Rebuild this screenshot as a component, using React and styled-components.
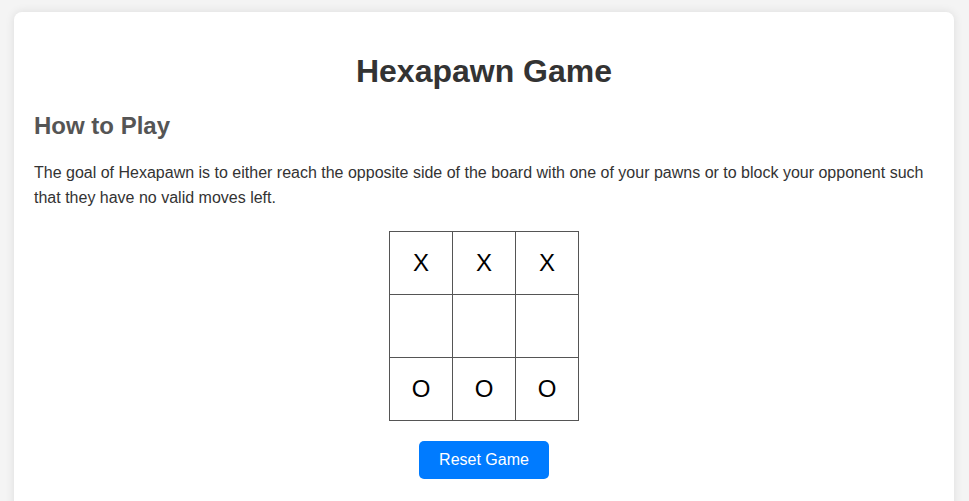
import React, { useState } from "react";
import styled, { createGlobalStyle } from "styled-components";

const Global = createGlobalStyle`
  html, body { margin: 0; padding: 0; background: #f4f4f4; }
  body { font-family: "Liberation Sans", Arial, sans-serif; color: #333; }
`;

const Card = styled.div`
  width: 900px;
  margin: 12px auto 12px 14px;
  padding: 20px;
  background: #fff;
  border-radius: 8px;
  box-shadow: 0 0 10px rgba(0, 0, 0, 0.1);
`;

const Title = styled.h1`
  font-size: 32px;
  margin: 21.44px 0;
  text-align: center;
  color: #333;
`;

const Subtitle = styled.h2`
  font-size: 24px;
  margin: 19.92px 0;
  color: #555;
`;

const Text = styled.p`
  font-size: 16px;
  line-height: 1.6;
  margin: 16px 0;
  color: #333;
`;

const Board = styled.div`
  display: grid;
  grid-template-columns: repeat(3, 62px);
  grid-auto-rows: 62px;
  gap: 1px;
  padding: 1px;
  background: #555;
  width: max-content;
  margin: 20px auto;
`;

const Cell = styled.div`
  background: #fff;
  display: flex;
  align-items: center;
  justify-content: center;
  font-size: 24px;
  color: #000;
  cursor: pointer;
`;

const ButtonRow = styled.div`
  display: flex;
  justify-content: center;
`;

const Button = styled.button`
  font-family: "Liberation Sans", Arial, sans-serif;
  font-size: 16px;
  padding: 10px 20px;
  background: #007bff;
  color: #fff;
  border: none;
  border-radius: 5px;
  cursor: pointer;
  line-height: 18px;
`;

const Status = styled.p`
  font-size: 18px;
  min-height: 26px;
  margin: 20px 0 0;
  text-align: center;
  color: #333;
`;

const initial = ["X", "X", "X", "", "", "", "O", "O", "O"];

export default function App() {
  const [board, setBoard] = useState(initial);
  return (
    <>
      <Global />
      <Card>
        <Title>Hexapawn Game</Title>
        <Subtitle>How to Play</Subtitle>
        <Text>
          The goal of Hexapawn is to either reach the opposite side of the board with one of your pawns or to block your opponent such that they have no valid moves left.
        </Text>
        <Board>
          {board.map((c, i) => (
            <Cell key={i}>{c}</Cell>
          ))}
        </Board>
        <ButtonRow>
          <Button onClick={() => setBoard(initial)}>Reset Game</Button>
        </ButtonRow>
        <Status />
      </Card>
    </>
  );
}
